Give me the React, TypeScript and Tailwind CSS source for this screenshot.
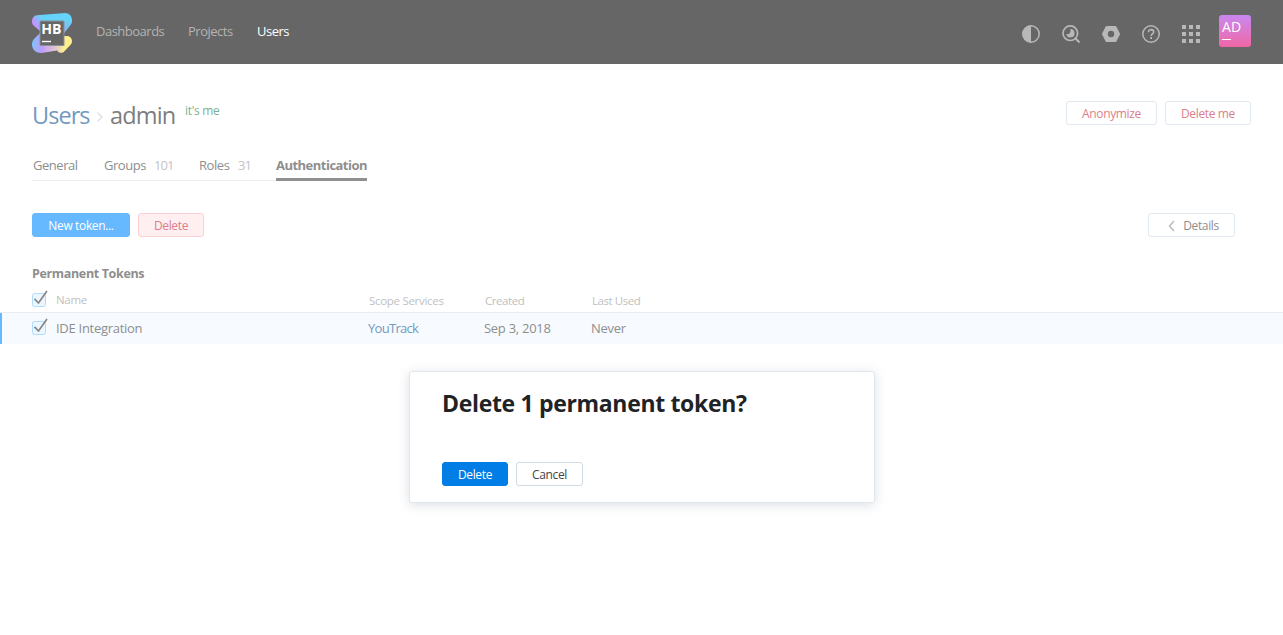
import React from 'react';

function Logo() {
  return (
    <svg width="40" height="40" viewBox="0 0 40 40" className="shrink-0">
      <defs>
        <linearGradient id="top" x1="2" y1="14" x2="18" y2="4" gradientUnits="userSpaceOnUse">
          <stop offset="0.1" stopColor="#c493ff" />
          <stop offset="0.6" stopColor="#66d4fa" />
        </linearGradient>
        <linearGradient id="right" x1="36" y1="6" x2="34" y2="22" gradientUnits="userSpaceOnUse">
          <stop offset="0" stopColor="#66d4fa" />
          <stop offset="1" stopColor="#8fa8f5" />
        </linearGradient>
        <linearGradient id="bottom" x1="0" y1="28" x2="38" y2="32" gradientUnits="userSpaceOnUse">
          <stop offset="0" stopColor="#7cc4fb" />
          <stop offset="0.28" stopColor="#c09cff" />
          <stop offset="0.7" stopColor="#e8cfc0" />
          <stop offset="0.85" stopColor="#fdf08c" />
        </linearGradient>
      </defs>
      <path d="M5 2.2 33 0C37 0 40 3 40 7c0 2-.5 3.500-1.600 5L32 20V8H8v10L1.500 12.500C.5 11.500 0 10 0 8.500 0 5 2 2.500 5 2.200Z" fill="url(#top)" />
      <path d="M32 8h7.900c-.1 1.600-.6 2.800-1.500 4L32 20Z" fill="url(#right)" />
      <path d="M8 20v12.500h24V23h3c3 0 5 2.500 5 5 0 1.600-.5 2.800-1.600 4l-6 6.300c-2 2.200-5.500 2.200-7.400-.8L9.500 40C4 40 0 36.500 0 31.500c0-2.500.8-4.300 2.500-6Z" fill="url(#bottom)" />
      <path d="M8 8h24v24.500H8Z" fill="#666" stroke="#8b8f98" strokeWidth="1" />
      <path d="M10 28.500h9" stroke="#fff" strokeWidth="1.400" />
      <text x="9.200" y="21.300" fill="#fff" fontFamily="Open Sans, sans-serif" fontSize="14.500" fontWeight="700" textLength="20.300" lengthAdjust="spacingAndGlyphs">HB</text>
    </svg>
  );
}

function HeaderIcons() {
  return (
    <div className="flex items-center gap-[20px] text-[#b8b8b8]">
      <svg width="20" height="20" viewBox="0 0 20 20">
        <circle cx="10" cy="10" r="8.200" fill="none" stroke="currentColor" strokeWidth="1.500" />
        <path d="M10 1.500a8.500 8.500 0 0 0 0 17Z" fill="currentColor" />
      </svg>
      <svg width="20" height="20" viewBox="0 0 20 20">
        <circle cx="9.300" cy="9.200" r="7.300" fill="none" stroke="currentColor" strokeWidth="1.700" />
        <path d="m14.300 14.300 4.200 4.200" stroke="currentColor" strokeWidth="2" />
        <path d="M9.200 5a4.200 4.200 0 1 1-4 4.800c.8.600 2.400.6 3.300-.3 1-1 1.300-2.900.7-4.500Z" fill="currentColor" />
      </svg>
      <svg width="20" height="20" viewBox="0 0 20 20">
        <path fillRule="evenodd" d="M5.600 2h8.800a1 1 0 0 1 .9.500l3.600 7a1 1 0 0 1 0 1l-3.600 7a1 1 0 0 1-.9.500H5.600a1 1 0 0 1-.9-.5l-3.600-7a1 1 0 0 1 0-1l3.600-7a1 1 0 0 1 .9-.5ZM10 6.800a3.200 3.200 0 1 0 0 6.400 3.200 3.200 0 0 0 0-6.400Z" fill="currentColor" />
      </svg>
      <svg width="20" height="20" viewBox="0 0 20 20" fill="none" stroke="currentColor">
        <circle cx="10" cy="10" r="8.200" strokeWidth="1.500" />
        <path d="M7.500 8.200c0-1.600 1.100-2.600 2.600-2.600s2.600 1 2.600 2.300c0 1.800-2.600 2-2.600 4.100" strokeWidth="1.600" />
        <path d="M9.200 14h1.800" strokeWidth="1.800" />
      </svg>
      <svg width="20" height="20" viewBox="0 0 20 20" fill="currentColor">
        <path d="M1 1h4v4H1zM8 1h4v4H8zM15 1h4v4h-4zM1 8h4v4H1zM8 8h4v4H8zM15 8h4v4h-4zM1 15h4v4H1zM8 15h4v4H8zM15 15h4v4h-4z" />
      </svg>
    </div>
  );
}

function Checkbox() {
  return (
    <svg width="16" height="18" viewBox="0 0 16 18" className="shrink-0">
      <rect x="0.500" y="3.500" width="13" height="13" rx="2" fill="#ebf6ff" stroke="#b0dbfb" />
      <path d="m2.500 8.800 4 4.200L15 1" fill="none" stroke="#858585" strokeWidth="1.700" />
    </svg>
  );
}

type ButtonProps = { className: string; children: React.ReactNode };

function Button({ className, children }: ButtonProps) {
  return (
    <button className={`flex h-6 shrink-0 items-center justify-center rounded-[3px] border pt-[2px] text-[12px] leading-5 tracking-[-0.350px] whitespace-nowrap ${className}`}>
      {children}
    </button>
  );
}

export default function App() {
  return (
    <div className="relative h-[635px] w-[1283px] overflow-hidden bg-white font-['Open_Sans','Noto_Sans',sans-serif] text-[13px] leading-5 text-[#8e8e8e]">
      <header className="flex h-16 items-start bg-[#666] pl-8">
        <div className="pt-[13px]"><Logo /></div>
        <nav className="flex pt-[21px] pl-6 tracking-[-0.500px] text-[#b3b3b3]">
          <a className="w-[92px]">Dashboards</a>
          <a className="w-[69px]">Projects</a>
          <a className="text-white">Users</a>
        </nav>
        <div className="ml-auto flex pr-8">
          <div className="pt-6 pr-[18px]"><HeaderIcons /></div>
          <div className="mt-[15px] h-8 w-8 rounded-[3px] bg-linear-to-b from-[#c887f0] to-[#f065a4] pt-[2px] pl-[3px] text-white">
            <div className="h-[22px] text-[14px] leading-[19px] font-medium tracking-[0.200px]">AD</div>
            <div className="h-px w-[9px] bg-white" />
          </div>
        </div>
      </header>

      <div className="flex h-[91px] items-start pr-8 pl-8 pt-[35px]">
        <h1 className="flex items-start text-[23.500px] leading-8">
          <a className="w-[64px] tracking-[-0.950px] text-[#7398be]">Users</a>
          <svg width="8" height="12" viewBox="0 0 8 12" className="mt-[12px] w-[8px]"><path d="m1.500 1.500 4.500 4.500-4.500 4.500" fill="none" stroke="#e3e3e3" strokeWidth="1.500" /></svg>
          <span className="w-[80px] pl-[6px] tracking-[-0.850px] text-[#7d7d7d]">admin</span>
        </h1>
        <span className="pt-[2px] pl-[1px] text-[12px] tracking-[-0.300px] text-[#7cb092]">it's me</span>
        <div className="ml-auto flex gap-2 pt-[2px] text-[#d97f8c]">
          <Button className="w-[91px] border-[#e1e8ef]">Anonymize</Button>
          <Button className="w-[86px] border-[#e1e8ef]">Delete me</Button>
        </div>
      </div>

      <div className="ml-8 flex h-[26px] w-[335px] items-stretch">
        <div className="flex w-[244px] border-b border-[#ededed] pl-[1px] tracking-[-0.450px]">
          <a className="w-[71px]">General</a>
          <a className="w-[50px]">Groups</a>
          <span className="w-[45px] tracking-[-0.900px] text-[#c4c4c4]">101</span>
          <a className="w-[39px]">Roles</a>
          <span className="tracking-[-0.900px] text-[#c4c4c4]">31</span>
        </div>
        <a className="w-[91px] border-b-[3px] border-[#8f8f8f] font-bold tracking-[-0.520px] whitespace-nowrap">Authentication</a>
      </div>

      <div className="flex gap-2 pt-8 pr-12 pl-8">
        <Button className="w-[98px] border-[#66b8ff] bg-[#66b8ff] text-white">New token...</Button>
        <Button className="w-[66px] border-[#fbcfd4] bg-[#ffeff0] text-[#d97f8c]">Delete</Button>
        <Button className="ml-auto w-[87px] border-[#e1e8ef]">
          <svg width="7" height="12" viewBox="0 0 7 12" className="mr-2 ml-[4px]"><path d="M6 1 1.500 6 6 11" fill="none" stroke="#b8b8b8" strokeWidth="1.400" /></svg>
          <span>Details</span>
        </Button>
      </div>

      <h2 className="mt-[27px] h-[25px] pl-8 text-[12.500px] font-bold tracking-[-0.350px] whitespace-nowrap">Permanent Tokens</h2>
      <div className="flex h-6 items-start border-b border-[#e8edf2] pl-8 text-[11.500px] tracking-[-0.300px] text-[#bfbfbf]">
        <div className="w-6 pt-[1px]"><Checkbox /></div>
        <span className="w-[313px] pt-[1px]">Name</span>
        <span className="w-[116px] pt-[2px]">Scope Services</span>
        <span className="w-[107px] pt-[2px] tracking-[-0.450px]">Created</span>
        <span className="pt-[2px] tracking-[-0.450px]">Last Used</span>
      </div>
      <div className="flex h-[31px] items-start border-l-2 border-[#66b8ff] bg-[#f7fbff] pl-[30px] tracking-[-0.280px]">
        <div className="w-6 pt-[5px]"><Checkbox /></div>
        <span className="w-[312px] pt-[5px]">IDE Integration</span>
        <span className="w-[116px] pt-[5px] tracking-[-0.700px] text-[#7398be]">YouTrack</span>
        <span className="w-[107px] pt-[5px]">Sep 3, 2018</span>
        <span className="pt-[5px]">Never</span>
      </div>

      <div role="dialog" className="absolute top-[371px] left-[409px] h-[132px] w-[466px] rounded-[3px] border border-[#e1e6ec] bg-white pt-[15px] pl-8 shadow-[0_2px_12px_rgba(0,42,76,0.150)]">
        <h3 className="text-[23px] leading-8 font-bold tracking-[-0.330px] whitespace-nowrap text-[#1f2326]">Delete 1 permanent token?</h3>
        <div className="flex gap-2 pt-[43px]">
          <Button className="w-[66px] border-[#007ee5] bg-[#007ee5] text-white">Delete</Button>
          <Button className="w-[67px] border-[#cfdbe5] text-[#444]">Cancel</Button>
        </div>
      </div>
    </div>
  );
}
